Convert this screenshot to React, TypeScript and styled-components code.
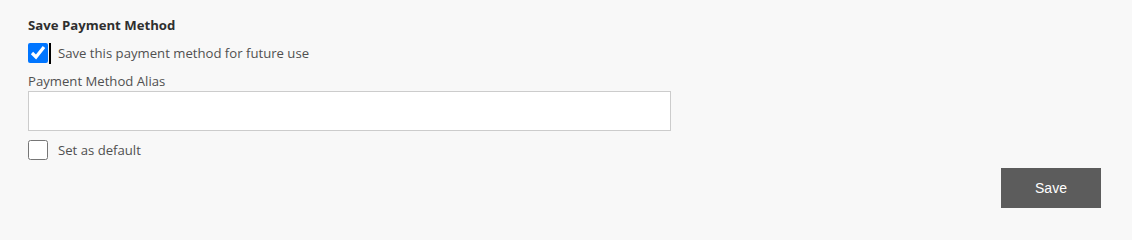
import React, { useState } from "react";
import styled, { createGlobalStyle } from "styled-components";

const GlobalStyle = createGlobalStyle`
  html, body {
    margin: 0;
    padding: 0;
    background: #f8f8f8;
  }
  body {
    font-family: "Segoe UI", "Open Sans", "Noto Sans", sans-serif;
  }
`;

const Panel = styled.div`
  box-sizing: border-box;
  width: 1132px;
  height: 217px;
  background: #f8f8f8;
  padding: 15px 31px 0 28px;
  display: flex;
  flex-direction: column;
  align-items: flex-start;
`;

const Title = styled.h3`
  margin: 0;
  font-size: 13.2px;
  line-height: 20px;
  font-weight: 700;
  color: #2f2f2f;
`;

const CheckRow = styled.label<{ $top: number }>`
  display: flex;
  align-items: center;
  gap: 8px;
  margin-top: ${(p) => p.$top}px;
  height: 20px;
  font-size: 13.15px;
  color: #505050;
  cursor: pointer;
`;

const BoxWrap = styled.span<{ $focused?: boolean }>`
  position: relative;
  display: inline-flex;
  width: 20px;
  height: 20px;
  margin-right: 2px;
  &::after {
    content: "";
    display: ${(p) => (p.$focused ? "block" : "none")};
    position: absolute;
    left: 21px;
    top: 0;
    width: 2px;
    height: 21px;
    background: #000000;
  }
`;

const Box = styled.input`
  margin: 0;
  width: 20px;
  height: 20px;
  accent-color: #0075ff;
`;

const FieldLabel = styled.div`
  margin-top: 9px;
  font-size: 13.15px;
  line-height: 19px;
  color: #505050;
`;

const TextInput = styled.input`
  box-sizing: border-box;
  width: 643px;
  height: 40px;
  margin: 0;
  border: 1px solid #cccccc;
  background: #ffffff;
  padding: 0 10px;
  font: inherit;
  outline: none;
`;

const Footer = styled.div`
  align-self: stretch;
  display: flex;
  justify-content: flex-end;
  margin-top: 8px;
`;

const SaveButton = styled.button`
  width: 100px;
  height: 40px;
  border: none;
  background: #5c5c5c;
  color: #ffffff;
  font-family: "Liberation Sans", Arial, sans-serif;
  font-size: 14px;
  cursor: pointer;
`;

export default function App() {
  const [save, setSave] = useState(true);
  const [def, setDef] = useState(false);
  return (
    <>
      <GlobalStyle />
      <Panel>
        <Title>Save Payment Method</Title>
        <CheckRow $top={8}>
          <BoxWrap $focused>
            <Box type="checkbox" checked={save} onChange={() => setSave(!save)} />
          </BoxWrap>
          Save this payment method for future use
        </CheckRow>
        <FieldLabel>Payment Method Alias</FieldLabel>
        <TextInput type="text" />
        <CheckRow $top={9}>
          <BoxWrap>
            <Box type="checkbox" checked={def} onChange={() => setDef(!def)} />
          </BoxWrap>
          Set as default
        </CheckRow>
        <Footer>
          <SaveButton>Save</SaveButton>
        </Footer>
      </Panel>
    </>
  );
}
